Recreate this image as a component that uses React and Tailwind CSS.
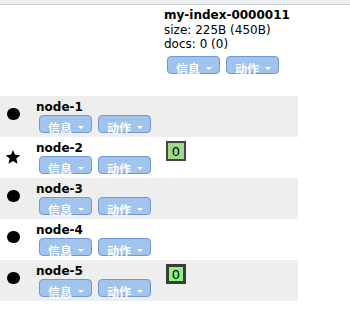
import React from "react";

function MenuButton({ label }) {
  return (
    <div className="relative h-[18px] w-[53px] rounded-[4px] border border-[#7396d6] bg-[#a0c4ec] text-white">
      <span className="absolute left-[8px] top-[5px] text-[12px] leading-[14px] font-bold [font-family:'Noto_Sans_CJK_SC',sans-serif]">
        {label}
      </span>
      <span className="absolute right-[7px] top-[10px] h-0 w-0 border-x-[3.5px] border-t-[3.5px] border-x-transparent border-t-white" />
    </div>
  );
}

function Buttons() {
  return (
    <div className="ml-[3px] flex gap-[6px]">
      <MenuButton label="信息" />
      <MenuButton label="动作" />
    </div>
  );
}

const nodes = [
  { name: "node-1", icon: "dot", badge: null },
  { name: "node-2", icon: "star", badge: "a" },
  { name: "node-3", icon: "dot", badge: null },
  { name: "node-4", icon: "dot", badge: null },
  { name: "node-5", icon: "dot", badge: "b" },
];

export default function App() {
  return (
    <div className="h-[311px] w-[350px] bg-white text-black [font-family:'DejaVu_Sans',sans-serif]">
      <div className="h-[5px] border-b border-[#c9cdcf] bg-[#eceff0]" />
      <div className="flex h-[91px] w-[298px]">
        <div className="w-[164px]" />
        <div className="pt-[3px]">
          <div className="text-[12px] font-bold leading-[15px]">my-index-0000011</div>
          <div className="text-[12px] leading-[14px]">size: 225B (450B)</div>
          <div className="text-[12px] leading-[14px]">docs: 0 (0)</div>
          <div className="mt-[5px]">
            <Buttons />
          </div>
        </div>
      </div>
      {nodes.map((n, i) => (
        <div
          key={n.name}
          className={`flex h-[41px] w-[298px] ${i % 2 === 0 ? "bg-[#eeeeee]" : "bg-white"}`}
        >
          <div className="flex w-[36px] justify-center pr-[10px]">
            {n.icon === "dot" ? (
              <div className="mt-[12px] h-[12px] w-[13px] rounded-full bg-black" />
            ) : (
              <svg className="mt-[12px]" width="16" height="16" viewBox="0 0 24 24">
                <path
                  d="M12 1.5l3.1 7.2 7.8.6-5.9 5.1 1.8 7.6L12 17.9 5.2 22l1.8-7.6L1.1 9.3l7.8-.6z"
                  fill="black"
                />
              </svg>
            )}
          </div>
          <div className="w-[130px] pt-[4px]">
            <div className="text-[12px] font-bold leading-[15px]">{n.name}</div>
            <Buttons />
          </div>
          <div className="pt-[4px]">
            {n.badge === "a" && (
              <div className="flex h-[20px] w-[20px] items-center justify-center border-2 border-[#444444] bg-[#a0d98c] text-[13px] leading-none">
                0
              </div>
            )}
            {n.badge === "b" && (
              <div className="flex h-[20px] w-[20px] items-center justify-center border-[3px] border-[#3a3a3a] bg-[#8ef27e] text-[13px] leading-none">
                0
              </div>
            )}
          </div>
        </div>
      ))}
    </div>
  );
}
